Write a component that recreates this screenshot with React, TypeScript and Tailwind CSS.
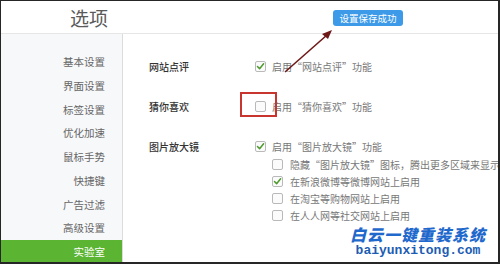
import React from "react";

const cjk = { fontFamily: '"Noto Sans CJK SC", "Noto Sans", sans-serif' };

function Box({ checked }: { checked?: boolean }) {
  return (
    <span className="inline-flex w-[11px] h-[11px] shrink-0 items-center justify-center rounded-[2px] border border-[#b9b9b9] bg-[#fbfbfb]">
      {checked && (
        <svg width="9" height="9" viewBox="0 0 9 9">
          <path d="M1.5 4.6 L3.6 6.8 L7.6 1.8" fill="none" stroke="#4c9a2a" strokeWidth="1.5" strokeLinecap="round" strokeLinejoin="round" />
        </svg>
      )}
    </span>
  );
}

const side = ["基本设置", "界面设置", "标签设置", "优化加速", "鼠标手势", "快捷键", "广告过滤", "高级设置", "实验室"];

export default function App() {
  return (
    <div
      className="relative w-[500px] h-[264px] overflow-hidden bg-white border-[#262626] border-t border-l border-r-2 border-b-2"
      style={cjk}
    >
      <div className="h-[33px] border-b border-[#e6e6e6] flex items-center">
        <div className="pl-[69px] text-[19px] leading-none text-[#5a5a5a] pt-[1px]">选项</div>
        <div className="ml-[225px] mt-[1px] w-[70px] h-[16px] rounded-[3px] bg-[#3c9ae8] text-white text-[9.5px] leading-[16px] text-center">
          设置保存成功
        </div>
      </div>
      <div className="flex h-[228px]">
        <div className="w-[122px] shrink-0 bg-[#f7f8fa] border-r border-[#dcdcdc] pt-[16px] flex flex-col">
          {side.map((s, i) => (
            <div
              key={s}
              className={
                "h-[23.75px] shrink-0 flex items-center justify-end pr-[17px] text-[10.5px] " +
                (i === side.length - 1 ? "bg-[#5bb432] text-white" : "text-[#666]")
              }
            >
              {s}
            </div>
          ))}
        </div>
        <div className="flex-1 min-w-0 pl-[26px] pt-[22px] flex flex-col gap-[20px]">
          <div className="flex items-center h-[20px]">
            <div className="w-[106px] shrink-0 text-[10px] font-medium text-[#333]">网站点评</div>
            <Box checked />
            <span className="ml-[6px] text-[10px] text-[#777]">启用“网站点评”功能</span>
          </div>
          <div className="flex items-center h-[20px]">
            <div className="w-[106px] shrink-0 text-[10px] font-medium text-[#333]">猜你喜欢</div>
            <Box />
            <span className="ml-[6px] text-[10px] text-[#777]">启用“猜你喜欢”功能</span>
          </div>
          <div className="flex flex-col">
            <div className="flex items-center h-[20px]">
              <div className="w-[106px] shrink-0 text-[10px] font-medium text-[#333]">图片放大镜</div>
              <Box checked />
              <span className="ml-[6px] text-[10px] text-[#777]">启用“图片放大镜”功能</span>
            </div>
            <div className="pl-[123px] flex flex-col">
              {[
                ["隐藏“图片放大镜”图标，腾出更多区域来显示图片", false],
                ["在新浪微博等微博网站上启用", true],
                ["在淘宝等购物网站上启用", false],
                ["在人人网等社交网站上启用", false],
              ].map(([t, c]) => (
                <div key={t as string} className="flex items-center h-[17px] whitespace-nowrap">
                  <Box checked={c as boolean} />
                  <span className="ml-[7px] text-[10px] text-[#777]">{t as string}</span>
                </div>
              ))}
            </div>
          </div>
        </div>
      </div>

      {/* annotation: red box */}
      <div className="absolute left-[239px] top-[91px] w-[37px] h-[25px] border-2 border-[#c8352f]" />
      {/* annotation: arrow */}
      <svg className="absolute left-0 top-0" width="500" height="264" viewBox="0 0 500 264">
        <line x1="284" y1="71" x2="326" y2="34" stroke="#6e1818" strokeWidth="1.6" />
        <path d="M331 29 L321 33 L327 38 Z" fill="#6e1818" />
      </svg>
      {/* watermark */}
      <div className="absolute left-[349px] top-[224px] flex flex-col items-center">
        <div
          className="text-[16px] leading-[18px] font-black italic tracking-[1px] text-[#1f68cc] [text-shadow:0_0_2px_#fff,0_0_2px_#fff]"
          style={cjk}
        >
          白云一键重装系统
        </div>
        <div
          className="text-[13px] leading-[15px] font-bold text-[#1c5db3] [text-shadow:0_0_2px_#fff,0_0_2px_#fff]"
          style={{ fontFamily: '"Liberation Mono", monospace' }}
        >
          baiyunxitong.com
        </div>
      </div>
    </div>
  );
}
